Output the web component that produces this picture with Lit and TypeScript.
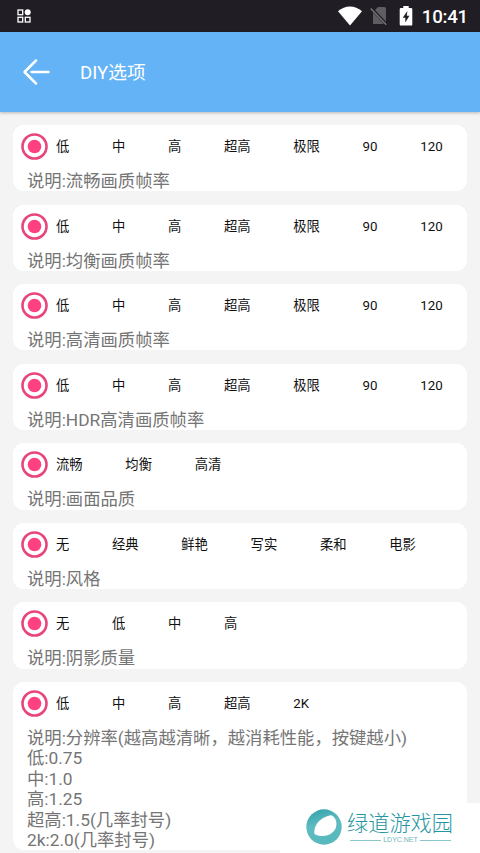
import { LitElement, html, css } from "lit";
import { customElement, property } from "lit/decorators.js";

interface Group {
  options: string[];
  notes: string[];
}

const rates = ["低", "中", "高", "超高", "极限", "90", "120"];

const groups: Group[] = [
  { options: rates, notes: ["说明:流畅画质帧率"] },
  { options: rates, notes: ["说明:均衡画质帧率"] },
  { options: rates, notes: ["说明:高清画质帧率"] },
  { options: rates, notes: ["说明:HDR高清画质帧率"] },
  { options: ["流畅", "均衡", "高清"], notes: ["说明:画面品质"] },
  { options: ["无", "经典", "鲜艳", "写实", "柔和", "电影"], notes: ["说明:风格"] },
  { options: ["无", "低", "中", "高"], notes: ["说明:阴影质量"] },
  {
    options: ["低", "中", "高", "超高", "2K"],
    notes: [
      "说明:分辨率(越高越清晰，越消耗性能，按键越小)",
      "低:0.75",
      "中:1.0",
      "高:1.25",
      "超高:1.5(几率封号)",
      "2k:2.0(几率封号)",
    ],
  },
];

@customElement("status-bar")
export class StatusBar extends LitElement {
  static styles = css`
    :host {
      display: flex;
      align-items: center;
      height: 32px;
      box-sizing: border-box;
      padding: 0 12px 0 17px;
      background: #211d24;
      color: #fff;
    }
    .apps { width: 14px; height: 14px; margin-right: auto; }
    .wifi { width: 24px; height: 20px; margin-right: 8px; }
    .sim { width: 18px; height: 20px; margin-right: 11px; }
    .battery { width: 14px; height: 20px; margin-right: 9px; }
    .time { font-size: 18.7px; line-height: 32px; font-weight: 500; padding-top: 2px; letter-spacing: -0.25px; }
  `;
  render() {
    return html`
      <svg class="apps" viewBox="0 0 14 14" fill="none" stroke="#fff" stroke-width="1.3">
        <rect x="1" y="1" width="4.7" height="4.7" />
        <rect x="1" y="8.3" width="4.7" height="4.7" />
        <rect x="8.3" y="8.3" width="4.7" height="4.7" />
        <circle cx="10.7" cy="3.3" r="3" fill="#fff" stroke="none" />
      </svg>
      <svg class="wifi" viewBox="0 0 24 20">
        <path d="M0 5.2C7-1.1 17-1.1 24 5.2L12 19.5Z" fill="#fff" />
      </svg>
      <svg class="sim" viewBox="0 0 18 20">
        <path d="M8 1H14.5Q16 1 16 2.5V18H3V6Z" fill="#5f5c62" />
        <path d="M1 2L17 19" stroke="#211d24" stroke-width="3.2" />
        <path d="M.7 2.6L16.3 18.8" stroke="#77747a" stroke-width="1.4" />
      </svg>
      <svg class="battery" viewBox="0 0 14 20">
        <path d="M4.3 0H9.7V2H12Q13.3 2 13.3 3.3V18.4Q13.3 19.6 12 19.6H2Q.7 19.6 .7 18.4V3.3Q.7 2 2 2H4.3Z" fill="#fff" />
        <path d="M8.4 5L3.7 11.7H6.3V16.6L10.4 9.8H7.8Z" fill="#211d24" />
      </svg>
      <span class="time">10:41</span>
    `;
  }
}

@customElement("option-card")
export class OptionCard extends LitElement {
  @property({ attribute: false }) group!: Group;

  static styles = css`
    :host {
      display: block;
      box-sizing: border-box;
      padding: 5px 8px 0;
      background: #fff;
      border-radius: 11px;
    }
    .row { display: flex; align-items: center; height: 33px; }
    .radio { flex: none; width: 27px; height: 27px; margin-right: 8px; }
    .options { display: flex; gap: 42.67px; padding-top: 1px; font-size: 13.33px; line-height: 20px; color: #111; white-space: nowrap; }
    .notes { padding: 7.87px 0 0 6px; font-size: 17.33px; line-height: 20.4px; color: #757575; white-space: nowrap; }
  `;
  render() {
    return html`
      <div class="row">
        <svg class="radio" viewBox="0 0 27 27">
          <circle cx="13.5" cy="13.5" r="12" fill="none" stroke="#e8457f" stroke-width="2.6" />
          <circle cx="13.5" cy="13.5" r="6.8" fill="#ff4081" />
        </svg>
        <div class="options">${this.group.options.map((o) => html`<span>${o}</span>`)}</div>
      </div>
      <div class="notes" lang="zh-CN">${this.group.notes.map((n) => html`<div>${n}</div>`)}</div>
    `;
  }
}

@customElement("site-mark")
export class SiteMark extends LitElement {
  static styles = css`
    :host { display: flex; gap: 5px; box-sizing: border-box; padding: 5px 0 0 26px; background: #fff; }
    .disc { flex: none; width: 36px; height: 38px; }
    .words { display: flex; flex-direction: column; width: 107px; padding-top: 4px; }
    .name { font: 300 21.2px/24px "Liberation Sans", "Noto Sans CJK SC", sans-serif; color: #2496a1; white-space: nowrap; }
    .sub { display: flex; align-items: center; gap: 2px; padding: 0 3px; font: 7px/8px "Liberation Sans", sans-serif; color: #6fb5bc; }
    .rule { flex: 1; height: 1px; background: #8bc6ca; }
  `;
  render() {
    return html`
      <svg class="disc" viewBox="0 0 36 38">
        <defs>
          <linearGradient id="g" x1="0" y1="0" x2="0.3" y2="1">
            <stop offset="0" stop-color="#2f9eaa" />
            <stop offset="0.5" stop-color="#5dbcc0" />
            <stop offset="1" stop-color="#58b9bd" />
          </linearGradient>
        </defs>
        <circle cx="18" cy="19" r="17.7" fill="url(#g)" />
        <path d="M8.5 26C7 17 15 8.5 25.5 7.2C32 11 31.500 19 27.500 23.500C23 28.500 14 29.500 8.500 26Z" fill="#fff" />
      </svg>
      <div class="words">
        <div class="name" lang="zh-CN">绿道游戏园</div>
        <div class="sub"><span class="rule"></span><span>LDYC.NET</span><span class="rule"></span></div>
      </div>
    `;
  }
}

@customElement("app-root")
export class AppRoot extends LitElement {
  static styles = css`
    :host {
      display: flex;
      flex-direction: column;
      position: relative;
      width: 480px;
      height: 853px;
      overflow: hidden;
      background: #f4f4f4;
      font-family: Roboto, "Noto Sans CJK SC", sans-serif;
    }
    .bar {
      flex: none;
      display: flex;
      align-items: center;
      gap: 30px;
      height: 80px;
      box-sizing: border-box;
      padding-left: 22px;
      background: #64b3f6;
      color: #fff;
      box-shadow: 0 1px 3px rgba(0, 0, 0, 0.25);
    }
    .back { width: 28px; height: 28px; }
    .title { padding-top: 1px; font-size: 18.67px; line-height: 26px; }
    .list { display: flex; flex-direction: column; gap: 13.3px; padding: 13.1px 13px 0; }
    .mark { position: absolute; left: 280px; top: 803px; width: 200px; height: 50px; }
  `;
  render() {
    return html`
      <status-bar></status-bar>
      <header class="bar">
        <svg class="back" viewBox="0 0 28 28" fill="none" stroke="#fff" stroke-width="2.5" stroke-linecap="round" stroke-linejoin="round">
          <path d="M14 2.5L2.5 14L14 25.5M9.5 14H26.5" />
        </svg>
        <span class="title">DIY选项</span>
      </header>
      <main class="list">${groups.map((g) => html`<option-card .group=${g}></option-card>`)}</main>
      <site-mark class="mark"></site-mark>
    `;
  }
}
